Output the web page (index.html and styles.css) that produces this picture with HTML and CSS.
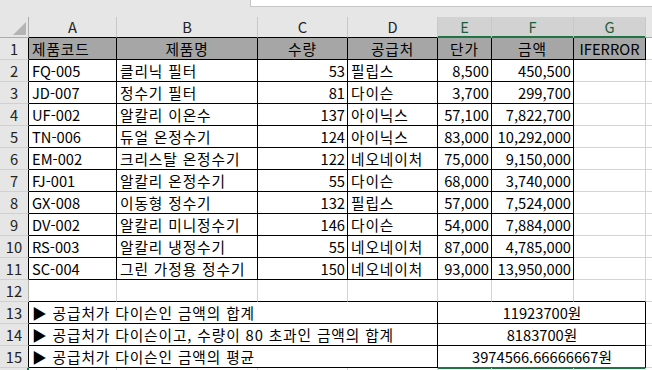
FILE: index.html
```html
<!DOCTYPE html>
<html lang="ko">
<head>
<meta charset="utf-8">
<link rel="stylesheet" href="styles.css">
</head>
<body>
<div class="topbar"><div class="namebox"></div></div>
<div class="sheet">
  <div class="corner"><svg width="13" height="13" viewBox="0 0 13 13"><polygon points="0,13 13,13 13,0" fill="#b4b4b4"/></svg></div>
  <div class="hd">A</div><div class="hd">B</div><div class="hd">C</div><div class="hd">D</div>
  <div class="hd sel">E</div><div class="hd sel">F</div><div class="hd sel">G</div><div class="hd hd-last"></div>

  <div class="rh">1</div>
  <div class="c title left ko">제품코드</div><div class="c title ko">제품명</div><div class="c title ko">수량</div><div class="c title ko">공급처</div><div class="c title ko">단가</div><div class="c title ko">금액</div><div class="c title">IFERROR</div><div class="c g"></div>

  <div class="rh">2</div>
  <div class="c b">FQ-005</div><div class="c b ko">클리닉 필터</div><div class="c b num">53</div><div class="c b ko">필립스</div><div class="c b num">8,500</div><div class="c b num">450,500</div><div class="c g"></div><div class="c g"></div>

  <div class="rh">3</div>
  <div class="c b">JD-007</div><div class="c b ko">정수기 필터</div><div class="c b num">81</div><div class="c b ko">다이슨</div><div class="c b num">3,700</div><div class="c b num">299,700</div><div class="c g"></div><div class="c g"></div>

  <div class="rh">4</div>
  <div class="c b">UF-002</div><div class="c b ko">알칼리 이온수</div><div class="c b num">137</div><div class="c b ko">아이닉스</div><div class="c b num">57,100</div><div class="c b num">7,822,700</div><div class="c g"></div><div class="c g"></div>

  <div class="rh">5</div>
  <div class="c b">TN-006</div><div class="c b ko">듀얼 온정수기</div><div class="c b num">124</div><div class="c b ko">아이닉스</div><div class="c b num">83,000</div><div class="c b num">10,292,000</div><div class="c g"></div><div class="c g"></div>

  <div class="rh">6</div>
  <div class="c b">EM-002</div><div class="c b ko">크리스탈 온정수기</div><div class="c b num">122</div><div class="c b ko">네오네이처</div><div class="c b num">75,000</div><div class="c b num">9,150,000</div><div class="c g"></div><div class="c g"></div>

  <div class="rh">7</div>
  <div class="c b">FJ-001</div><div class="c b ko">알칼리 온정수기</div><div class="c b num">55</div><div class="c b ko">다이슨</div><div class="c b num">68,000</div><div class="c b num">3,740,000</div><div class="c g"></div><div class="c g"></div>

  <div class="rh">8</div>
  <div class="c b">GX-008</div><div class="c b ko">이동형 정수기</div><div class="c b num">132</div><div class="c b ko">필립스</div><div class="c b num">57,000</div><div class="c b num">7,524,000</div><div class="c g"></div><div class="c g"></div>

  <div class="rh">9</div>
  <div class="c b">DV-002</div><div class="c b ko">알칼리 미니정수기</div><div class="c b num">146</div><div class="c b ko">다이슨</div><div class="c b num">54,000</div><div class="c b num">7,884,000</div><div class="c g"></div><div class="c g"></div>

  <div class="rh">10</div>
  <div class="c b">RS-003</div><div class="c b ko">알칼리 냉정수기</div><div class="c b num">55</div><div class="c b ko">네오네이처</div><div class="c b num">87,000</div><div class="c b num">4,785,000</div><div class="c g"></div><div class="c g"></div>

  <div class="rh">11</div>
  <div class="c b">SC-004</div><div class="c b ko">그린 가정용 정수기</div><div class="c b num">150</div><div class="c b ko">네오네이처</div><div class="c b num">93,000</div><div class="c b num">13,950,000</div><div class="c g"></div><div class="c g"></div>

  <div class="rh rh-g">12</div>
  <div class="c g bb"></div><div class="c g bb"></div><div class="c g bb"></div><div class="c g bb"></div><div class="c g bb"></div><div class="c g bb"></div><div class="c g bb"></div><div class="c g"></div>

  <div class="rh">13</div>
  <div class="c b span4 ko">▶ 공급처가 다이슨인 금액의 합계</div><div class="c b span3 center">11923700원</div><div class="c g"></div>

  <div class="rh">14</div>
  <div class="c b span4 ko">▶ 공급처가 다이슨이고, 수량이 80 초과인 금액의 합계</div><div class="c b span3 center">8183700원</div><div class="c g"></div>

  <div class="rh">15</div>
  <div class="c b span4 ko">▶ 공급처가 다이슨인 금액의 평균</div><div class="c b span3 center selbottom">3974566.66666667원</div><div class="c g"></div>

  <div class="rh rh-g rh-last"></div>
  <div class="c g"></div><div class="c g"></div><div class="c g"></div><div class="c g"></div><div class="c g"></div><div class="c g"></div><div class="c g"></div><div class="c g"></div>
</div>
</body>
</html>
```

FILE: styles.css
```css
html, body {
  margin: 0;
  padding: 0;
  background: #ffffff;
  overflow: hidden;
  width: 652px;
  height: 370px;
}

body {
  font-family: "Noto Sans CJK KR", "Liberation Sans", sans-serif;
  font-size: 14.7px;
  color: #000;
}

.topbar {
  height: 17px;
  background: #e6e6e6;
  display: flex;
  justify-content: flex-end;
  align-items: flex-start;
}

.namebox {
  width: 401px;
  height: 6px;
  background: #ffffff;
  border-left: 1px solid #c6c6c6;
  border-bottom: 1px solid #c6c6c6;
}

.sheet {
  display: grid;
  grid-template-columns: 29px 88px 141px 90px 90px 54px 82px 72px 80px;
  grid-template-rows: 21px repeat(16, 22px);
  width: 726px;
}

.sheet > div {
  box-sizing: border-box;
  white-space: nowrap;
  overflow: hidden;
}

.corner {
  background: #e6e6e6;
  border-right: 1px solid #ababab;
  border-bottom: 1px solid #ababab;
  display: flex;
  justify-content: flex-end;
  align-items: flex-end;
  padding: 0 2px 2px 0;
}

.corner svg {
  display: block;
}

.hd {
  background: #e6e6e6;
  border-right: 1px solid #c8c8c8;
  border-bottom: 1px solid #000;
  text-align: center;
  line-height: 20px;
  color: #222;
}

.hd.sel {
  background: #d2d2d2;
  color: #1d5e3a;
  border-bottom: 1px solid #217346;
  box-shadow: inset 0 -1px 0 #217346;
}

.hd.hd-last {
  border-bottom-color: #ababab;
}

.rh {
  background: #e6e6e6;
  border-right: 1px solid #000;
  border-bottom: 1px solid #d0d0d0;
  text-align: center;
  line-height: 21px;
  color: #222;
}

.rh.rh-g {
  border-right-color: #ababab;
}

.rh.rh-last {
  border-right: 2px solid #217346;
}

.c {
  line-height: 21px;
  padding: 0 2px 0 3px;
  border-right: 1px solid #d4d4d4;
  border-bottom: 1px solid #d4d4d4;
}

.ko {
  letter-spacing: 0.9px;
}

.c.b {
  border-right-color: #000;
  border-bottom-color: #000;
}

.c.bb {
  border-bottom-color: #000;
}

.c.title {
  background: #a6a6a6;
  border-right-color: #000;
  border-bottom-color: #000;
  text-align: center;
  padding: 0;
}

.c.title.left {
  text-align: left;
  padding-left: 3px;
}

.num {
  text-align: right;
}

.center {
  text-align: center;
}

.span4 {
  grid-column: span 4;
}

.span3 {
  grid-column: span 3;
}

.c.selbottom {
  border-bottom-color: #217346;
  box-shadow: 0 1px 0 #217346;
  overflow: visible;
}
```
